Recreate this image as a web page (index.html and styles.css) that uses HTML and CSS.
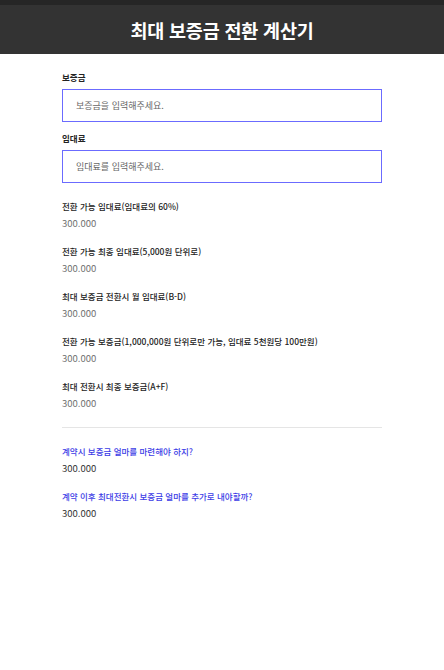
FILE: index.html
```html
<!DOCTYPE html>
<html lang="ko">
<head>
<meta charset="utf-8">
<title>최대 보증금 전환 계산기</title>
<link rel="stylesheet" href="styles.css">
</head>
<body>
<header class="top">
  <h1 class="title">최대 보증금 전환 계산기</h1>
</header>
<main class="content">
  <label class="field-label" for="deposit">보증금</label>
  <input class="field-input" id="deposit" type="text" placeholder="보증금을 입력해주세요.">
  <label class="field-label gap" for="rent">임대료</label>
  <input class="field-input" id="rent" type="text" placeholder="임대료를 입력해주세요.">

  <section class="results">
    <div class="row">
      <div class="row-label">전환 가능 임대료(임대료의 60%)</div>
      <div class="row-value">300.000</div>
    </div>
    <div class="row">
      <div class="row-label">전환 가능 최종 임대료(5,000원 단위로)</div>
      <div class="row-value">300.000</div>
    </div>
    <div class="row">
      <div class="row-label">최대 보증금 전환시 월 임대료(B-D)</div>
      <div class="row-value">300.000</div>
    </div>
    <div class="row">
      <div class="row-label">전환 가능 보증금(1,000,000원 단위로만 가능, 임대료 5천원당 100만원)</div>
      <div class="row-value">300.000</div>
    </div>
    <div class="row">
      <div class="row-label">최대 전환시 최종 보증금(A+F)</div>
      <div class="row-value">300.000</div>
    </div>
  </section>

  <hr class="divider">

  <section class="answers">
    <div class="row">
      <div class="q-label">계약시 보증금 얼마를 마련해야 하지?</div>
      <div class="q-value">300.000</div>
    </div>
    <div class="row">
      <div class="q-label">계약 이후 최대전환시 보증금 얼마를 추가로 내야할까?</div>
      <div class="q-value">300.000</div>
    </div>
  </section>
</main>
</body>
</html>
```
FILE: styles.css
```css
* { box-sizing: border-box; }
html, body { margin: 0; padding: 0; background: #fff; }
body {
  font-family: "Noto Sans CJK KR", "Noto Sans", sans-serif;
  color: #222;
}
.top {
  height: 54px;
  background: #333;
  border-top: 5px solid #262626;
  display: flex;
  align-items: center;
  justify-content: center;
}
.title {
  margin: 0;
  color: #fff;
  font-size: 18.5px;
  font-weight: 700;
  line-height: 24px;
  letter-spacing: -0.2px;
}
.content {
  width: 320px;
  margin: 0 auto;
  padding: 17px 0 40px;
  display: flex;
  flex-direction: column;
}
.field-label {
  display: block;
  font-size: 8.5px;
  line-height: 12px;
  font-weight: 700;
  color: #222;
  margin-bottom: 6px;
}
.field-label.gap { margin-top: 10px; }
.field-input {
  display: block;
  width: 320px;
  height: 33px;
  border: 1px solid #6b6bff;
  border-radius: 0;
  padding: 0 13px;
  font-family: inherit;
  font-size: 9px;
  color: #333;
  outline: none;
  background: #fff;
}
.field-input::placeholder { color: #666; }
.results {
  margin-top: 17px;
  display: flex;
  flex-direction: column;
  gap: 15px;
}
.answers {
  display: flex;
  flex-direction: column;
  gap: 15px;
}
.row { display: flex; flex-direction: column; gap: 4px; }
.row-label {
  font-size: 8.5px;
  line-height: 12px;
  font-weight: 500;
  color: #222;
}
.row-value {
  font-size: 9.5px;
  line-height: 14px;
  color: #707070;
}
.divider {
  width: 100%;
  border: 0;
  border-top: 1px solid #e5e5e5;
  margin: 17px 0 17px;
}
.q-label {
  font-size: 8.5px;
  line-height: 12px;
  font-weight: 500;
  color: #3c3ce6;
}
.q-value {
  font-size: 9.5px;
  line-height: 14px;
  color: #333;
}
```
